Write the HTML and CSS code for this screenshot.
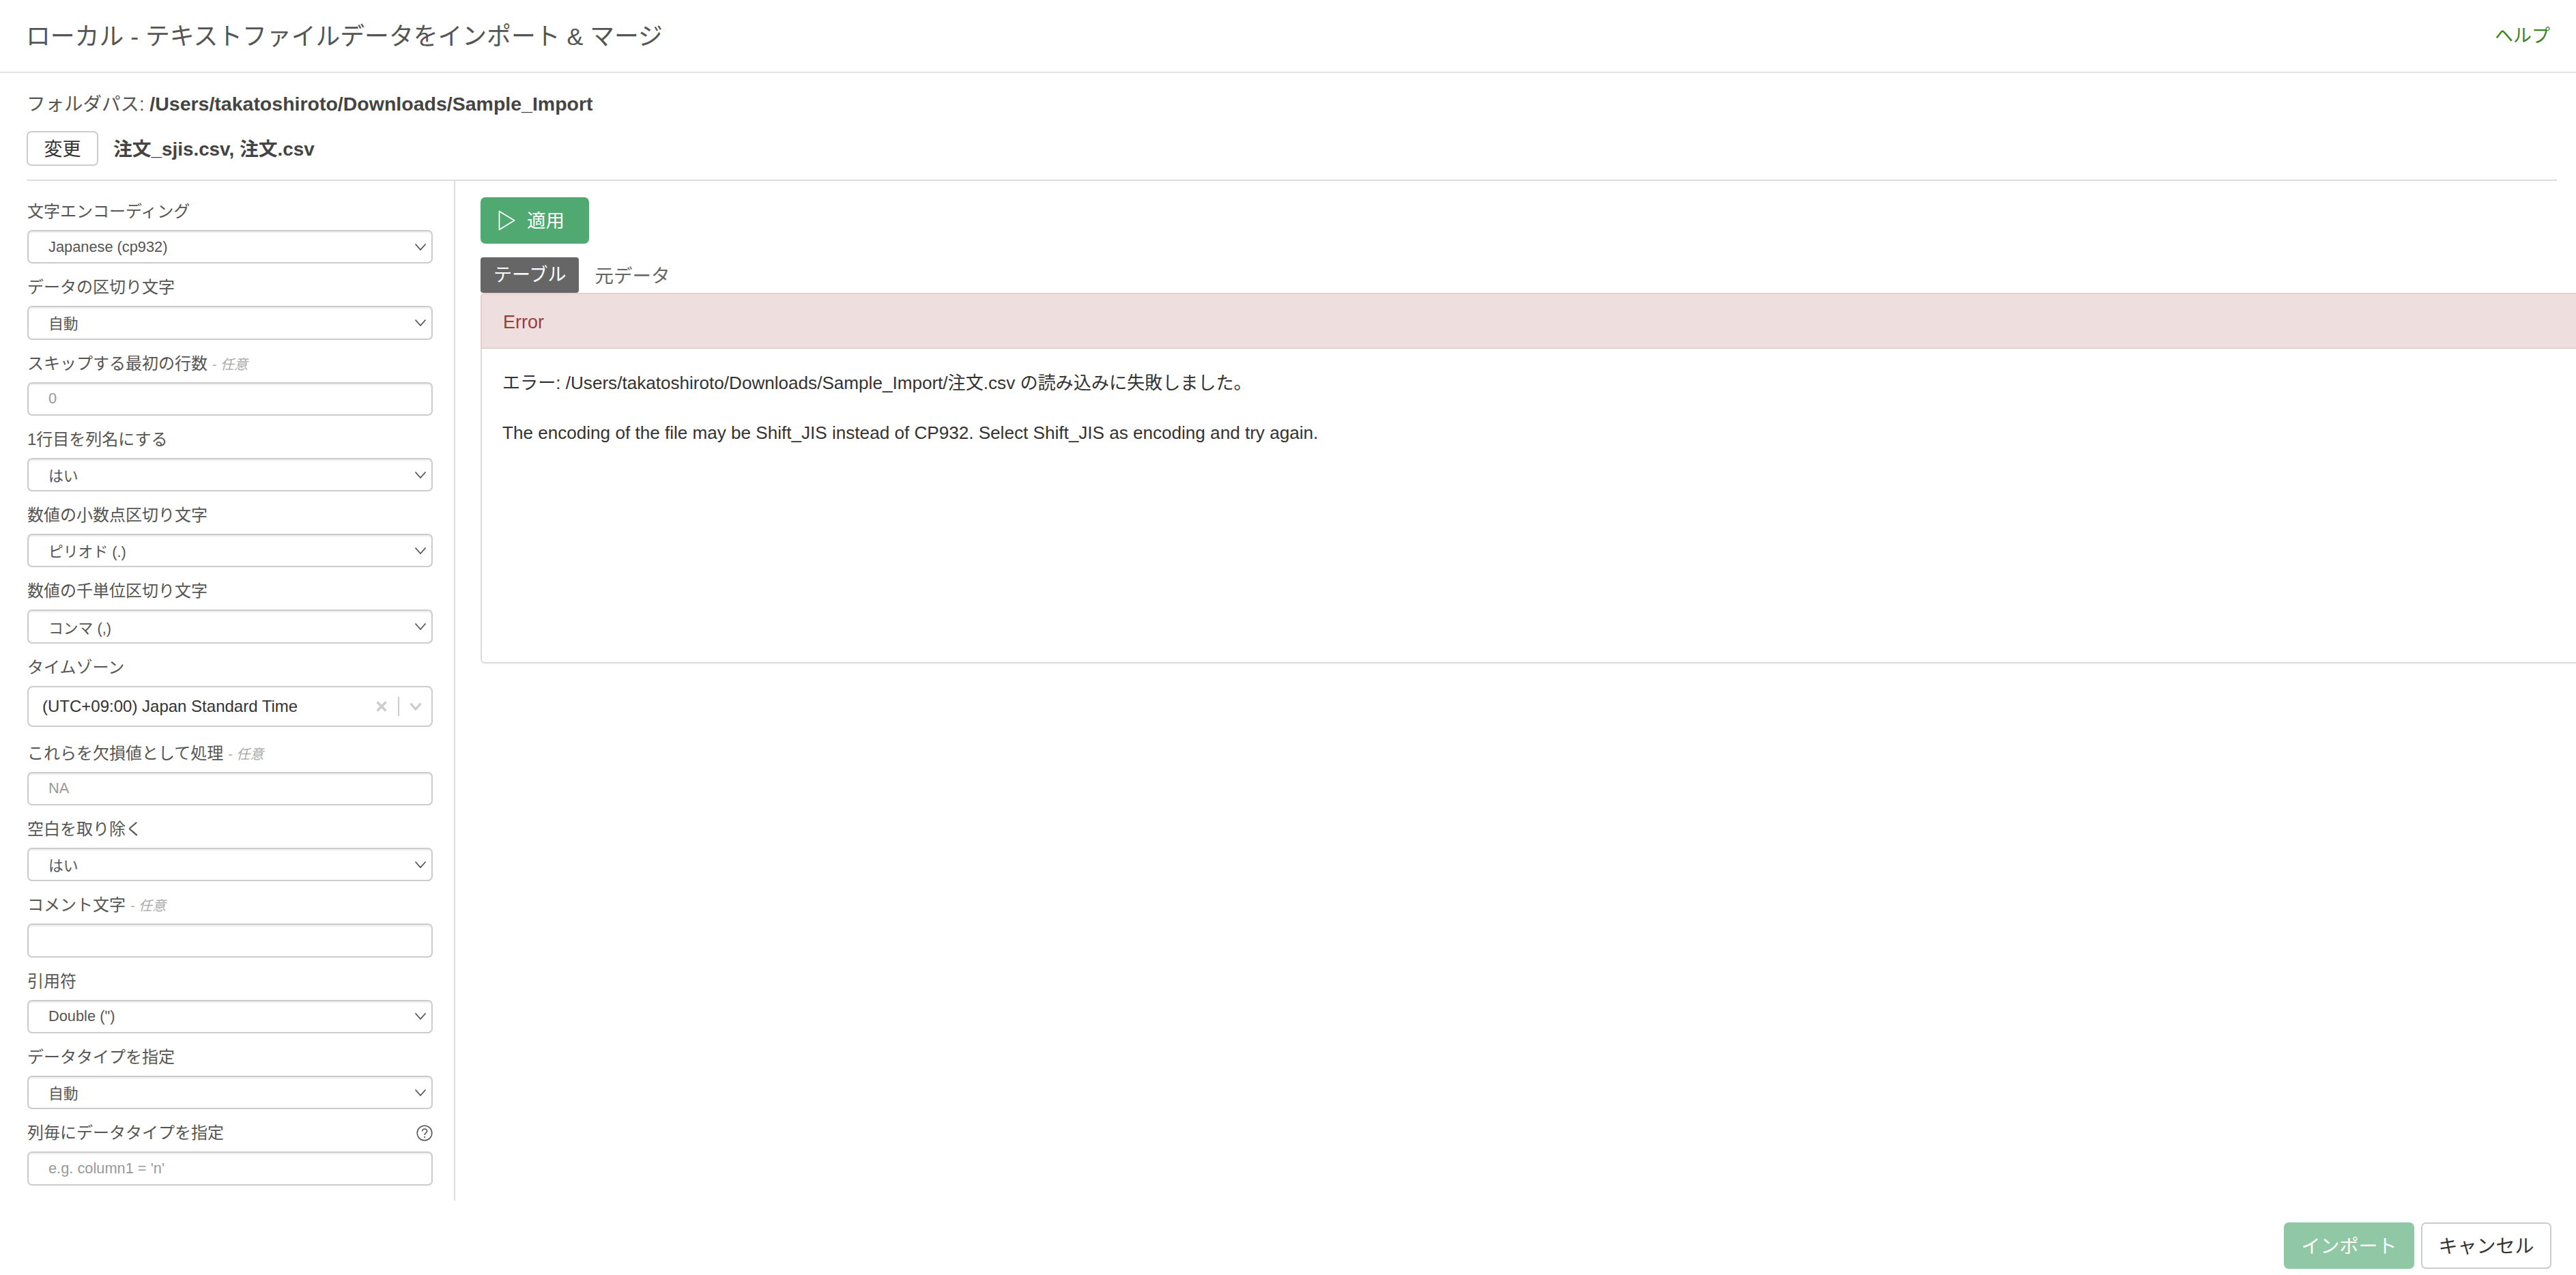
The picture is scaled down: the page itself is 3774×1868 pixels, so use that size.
FILE: index.html
```html
<!DOCTYPE html>
<html lang="ja">
<head>
<meta charset="utf-8">
<title>ローカル - テキストファイルデータをインポート &amp; マージ</title>
<link rel="stylesheet" href="styles.css">
</head>
<body>
<svg class="defs" width="0" height="0" aria-hidden="true">
  <symbol id="chev" viewBox="0 0 18 12"><path d="M1.5 1.5 9 10l7.5-8.5" fill="none" stroke="currentColor" stroke-width="1.8"/></symbol>
</svg>
<div class="page">
  <header class="top">
    <h1 class="title">ローカル - テキストファイルデータをインポート &amp; マージ</h1>
    <a class="help">ヘルプ</a>
  </header>
  <section class="source">
    <div class="folder">フォルダパス: <b>/Users/takatoshiroto/Downloads/Sample_Import</b></div>
    <div class="files">
      <button class="btn btn-change">変更</button>
      <b class="names">注文_sjis.csv, 注文.csv</b>
    </div>
  </section>
  <div class="body">
    <aside class="side">
      <div class="field"><label class="label">文字エンコーディング</label><div class="select"><span>Japanese (cp932)</span><svg class="chev"><use href="#chev"/></svg></div></div>
      <div class="field"><label class="label">データの区切り文字</label><div class="select"><span>自動</span><svg class="chev"><use href="#chev"/></svg></div></div>
      <div class="field"><label class="label">スキップする最初の行数 <em>- 任意</em></label><input class="input" placeholder="0"></div>
      <div class="field"><label class="label">1行目を列名にする</label><div class="select"><span>はい</span><svg class="chev"><use href="#chev"/></svg></div></div>
      <div class="field"><label class="label">数値の小数点区切り文字</label><div class="select"><span>ピリオド (.)</span><svg class="chev"><use href="#chev"/></svg></div></div>
      <div class="field"><label class="label">数値の千単位区切り文字</label><div class="select"><span>コンマ (,)</span><svg class="chev"><use href="#chev"/></svg></div></div>
      <div class="field field-zone"><label class="label">タイムゾーン</label>
        <div class="zone">
          <span class="zone-value">(UTC+09:00) Japan Standard Time</span>
          <svg class="zone-x" viewBox="0 0 16 16"><path d="M1.500 1.500 14.500 14.500M14.500 1.500 1.500 14.500" fill="none" stroke="currentColor" stroke-width="3.400"/></svg>
          <i class="zone-sep"></i>
          <svg class="zone-chev" viewBox="0 0 18 12"><path d="M1.500 1.500 9 10l7.500-8.500" fill="none" stroke="currentColor" stroke-width="3.400"/></svg>
        </div>
      </div>
      <div class="field"><label class="label">これらを欠損値として処理 <em>- 任意</em></label><input class="input" placeholder="NA"></div>
      <div class="field"><label class="label">空白を取り除く</label><div class="select"><span>はい</span><svg class="chev"><use href="#chev"/></svg></div></div>
      <div class="field"><label class="label">コメント文字 <em>- 任意</em></label><input class="input"></div>
      <div class="field"><label class="label">引用符</label><div class="select"><span>Double (")</span><svg class="chev"><use href="#chev"/></svg></div></div>
      <div class="field"><label class="label">データタイプを指定</label><div class="select"><span>自動</span><svg class="chev"><use href="#chev"/></svg></div></div>
      <div class="field field-last"><label class="label label-row">列毎にデータタイプを指定
        <svg class="q" viewBox="0 0 24 24"><circle cx="12" cy="12" r="10.8" fill="none" stroke="currentColor" stroke-width="1.5"/><path d="M8.600 9.500c0-2.100 1.500-3.500 3.500-3.500s3.500 1.300 3.500 3.200c0 2.800-3.500 2.800-3.500 5.800" fill="none" stroke="currentColor" stroke-width="1.600"/><circle cx="12.100" cy="18" r="1.100" fill="currentColor"/></svg>
      </label><input class="input" placeholder="e.g. column1 = 'n'"></div>
    </aside>
    <main class="main">
      <button class="btn btn-apply">
        <svg class="play" viewBox="0 0 25 30"><path d="M1.500 1.500v27L23.500 15z" fill="none" stroke="currentColor" stroke-width="1.800" stroke-linejoin="round"/></svg>
        <span class="apply-text">適用</span>
      </button>
      <nav class="tabs"><a class="tab tab-on">テーブル</a><a class="tab tab-off">元データ</a></nav>
      <section class="panel">
        <div class="panel-head">Error</div>
        <div class="panel-body">
          <p>エラー: /Users/takatoshiroto/Downloads/Sample_Import/注文.csv の読み込みに失敗しました。</p>
          <p>The encoding of the file may be Shift_JIS instead of CP932. Select Shift_JIS as encoding and try again.</p>
        </div>
      </section>
    </main>
  </div>
  <footer class="foot">
    <button class="btn btn-import">インポート</button>
    <button class="btn btn-cancel">キャンセル</button>
  </footer>
</div>
</body>
</html>
```

FILE: styles.css
```css
* { box-sizing: border-box; }
html, body { margin: 0; height: 100%; }
body {
  overflow: hidden;
  background: #fff;
  color: #333;
  font-family: "Liberation Sans", "Noto Sans CJK JP", sans-serif;
  font-size: 24px;
}
.defs { display: block; height: 0; }
.page { display: flex; flex-direction: column; height: 1868px; }

.top {
  display: flex;
  justify-content: space-between;
  align-items: center;
  height: 107px;
  padding: 0 38px 5px 38px;
  border-bottom: 2px solid #e3e3e3;
}
.title { margin: 0; font-size: 35.800px; font-weight: 400; color: #555; }
.help { font-size: 27px; color: #3a8424; }

.source { margin: 0 28px 0 39px; height: 158px; border-bottom: 2px solid #ddd; }
.folder { padding-top: 26px; line-height: 38px; font-size: 27.500px; color: #555; }
.folder b { font-size: 28.500px; color: #444; }
.files { display: flex; align-items: center; gap: 22px; margin-top: 20px; }
.names { padding-bottom: 3px; font-size: 27.800px; color: #444; }

.btn {
  font-family: inherit;
  border-radius: 7px;
  cursor: pointer;
}
.btn-change {
  width: 105px;
  height: 51px;
  padding: 0 0 3px;
  font-size: 27px;
  color: #333;
  background: #fff;
  border: 2px solid #ccc;
}

.body { display: flex; height: 1494px; }
.side {
  flex: 0 0 667px;
  padding: 28px 31px 0 40px;
  border-right: 2px solid #ddd;
}
.field { margin-bottom: 18px; }
.field-zone { margin-bottom: 22px; }
.field-last { margin-bottom: 0; }
.label {
  display: block;
  height: 34px;
  margin-bottom: 10px;
  line-height: 34px;
  font-size: 24px;
  color: #555;
  white-space: nowrap;
}
.label em { font-size: 20px; color: #aaa; }
.label-row { display: flex; justify-content: space-between; align-items: center; }
.q { width: 24px; height: 24px; color: #555; }

.select, .input {
  display: flex;
  align-items: center;
  width: 100%;
  height: 49.300px;
  padding: 0 7px 0 29px;
  font: inherit;
  font-size: 21.800px;
  color: #555;
  background: #fff;
  border: 2px solid #ccc;
  border-radius: 7px;
  box-shadow: inset 0 2px 2px rgba(0, 0, 0, .075);
  outline: none;
}
.input::placeholder { color: #999; opacity: 1; }
.select span { flex: 1; }
.chev { width: 18px; height: 12px; color: #555; }

.zone {
  display: flex;
  align-items: center;
  height: 60px;
  padding: 0 14px 0 20px;
  border: 2px solid #ccc;
  border-radius: 8px;
}
.zone-value { flex: 1; font-size: 24px; color: #333; }
.zone-x { width: 16px; height: 16px; color: #ccc; }
.zone-sep { width: 2px; height: 28px; margin: 0 15px 0 16px; background: #ccc; }
.zone-chev { width: 18px; height: 12px; color: #ccc; }

.main { flex: 1; min-width: 0; padding: 24px 0 0 37px; }
.btn-apply {
  display: flex;
  align-items: center;
  gap: 17px;
  width: 159px;
  height: 68px;
  padding: 0 0 0 26px;
  font-size: 27.500px;
  color: #fff;
  background: #4fa971;
  border: 0;
}
.apply-text { padding-bottom: 4px; }
.play { width: 25px; height: 30px; }

.tabs { display: flex; margin-top: 20px; }
.tab {
  display: block;
  height: 52px;
  padding: 0 19px;
  line-height: 53px;
  font-size: 27px;
  color: #666;
}
.tab-on { color: #fff; background: #666; border-radius: 4px; }
.tab-off { padding-left: 23px; line-height: 55px; font-size: 27.500px; }

.panel {
  width: calc(100% + 40px);
  height: 543px;
  border: 2px solid #ddd;
  border-radius: 6px;
  box-shadow: 0 1px 2px rgba(0, 0, 0, .05);
}
.panel-head {
  height: 82px;
  margin: -2px -2px 0;
  padding: 0 31px;
  line-height: 82px;
  font-size: 27px;
  color: #963f3c;
  background: #efdede;
  border: 2px solid #e6cfcf;
  border-radius: 6px 6px 0 0;
}
.panel-body { padding: 33px 30px 0; }
.panel-body p { margin: 0 0 38.500px; line-height: 34px; font-size: 26.100px; color: #333; }

.foot {
  display: flex;
  justify-content: flex-end;
  gap: 10px;
  margin-top: 32px;
  padding-right: 36px;
}
.btn-import, .btn-cancel { width: 191px; height: 68px; padding: 0 0 2px; font-size: 28px; }
.btn-import { color: #fff; background: #90c8a5; border: 0; }
.btn-cancel { color: #333; background: #fff; border: 2px solid #ccc; }
```
